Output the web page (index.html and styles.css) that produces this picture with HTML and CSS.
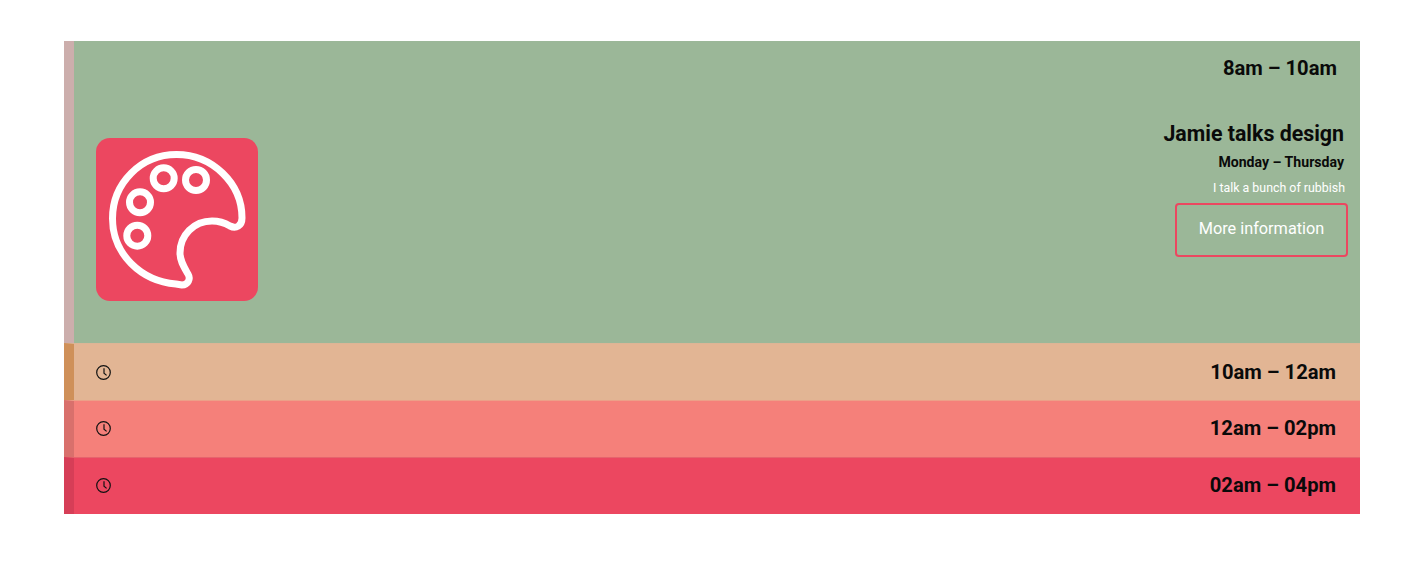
FILE: index.html
```html
<!DOCTYPE html>
<html lang="en">
<head>
    <meta charset="UTF-8">
    <meta name="viewport" content="width=device-width, initial-scale=1.0">
    <title>Schedule</title>
    <link rel="stylesheet" href="styles.css">
</head>
<body>
    <ul class="schedule">
        <li class="slot slot-green">
            <div class="slot-head open-head">
                <span class="time">8am – 10am</span>
            </div>
            <div class="slot-body">
                <div class="art">
                    <svg viewBox="0 0 162 163" width="162" height="163" fill="none" stroke="#fff" stroke-width="7">
                        <path stroke-linejoin="round" d="M80.5 16.5C45 16.5 16.5 45 16.5 80.5C16.5 116 45 143 80 146L86 147C92 147 95 141 92 136C88 129 84 123 84 115C84 97 98 83 116 83C123 83 129 85 134 88C140 91 146 88 146 80C146 45 116 16.5 80.5 16.5Z"/>
                        <circle cx="67.7" cy="40.3" r="10.5"/>
                        <circle cx="100" cy="42" r="10.5"/>
                        <circle cx="44" cy="64.3" r="10.5"/>
                        <circle cx="41.3" cy="97.7" r="10.5"/>
                    </svg>
                </div>
                <div class="details">
                    <h2>Jamie talks design</h2>
                    <h3>Monday – Thursday</h3>
                    <p>I talk a bunch of rubbish</p>
                    <a class="more" href="#">More information</a>
                </div>
            </div>
        </li>
        <li class="slot slot-orange">
            <div class="slot-head">
                <svg class="clock" viewBox="0 0 15 15" width="15" height="15"><circle cx="7.5" cy="7.5" r="6.8"/><path d="M8 3.2v5l2.6 2.2"/></svg>
                <span class="time">10am – 12am</span>
            </div>
        </li>
        <li class="slot slot-pink">
            <div class="slot-head">
                <svg class="clock" viewBox="0 0 15 15" width="15" height="15"><circle cx="7.5" cy="7.5" r="6.8"/><path d="M8 3.2v5l2.6 2.2"/></svg>
                <span class="time">12am – 02pm</span>
            </div>
        </li>
        <li class="slot slot-red">
            <div class="slot-head">
                <svg class="clock" viewBox="0 0 15 15" width="15" height="15"><circle cx="7.5" cy="7.5" r="6.8"/><path d="M8 3.2v5l2.6 2.2"/></svg>
                <span class="time">02am – 04pm</span>
            </div>
        </li>
    </ul>
</body>
</html>
```

FILE: styles.css
```css
body {
    margin: 0;
    background: #fff;
    font-family: Roboto, "Liberation Sans", sans-serif;
    color: #0a0a0a;
}
.schedule {
    list-style: none;
    margin: 41px 58px 0 64px;
    padding: 0;
}
.slot {
    border-left: 10px solid;
}
.slot-green {
    background: #9bb798;
    border-color: #ccaeac;
    height: 302px;
}
.slot-orange {
    background: #e2b594;
    border-color: #cf9059;
    border-top: 1px solid #dcb596;
}
.slot-pink {
    background: #f5807a;
    border-color: #d9706c;
    border-top: 1px solid #eca088;
}
.slot-red {
    background: #ec4760;
    border-color: #d63e57;
    border-top: 1px solid #e5646d;
}
.slot-head {
    display: flex;
    align-items: center;
    justify-content: space-between;
    height: 56px;
    padding: 0 24px 0 22px;
}
.slot-pink .slot-head,
.slot-red .slot-head {
    height: 54px;
    padding-bottom: 2px;
}
.open-head {
    height: 54px;
    justify-content: flex-end;
    padding-right: 23px;
}
.time {
    font-size: 20.2px;
    font-weight: 700;
}
.clock {
    fill: none;
    stroke: #111;
    stroke-width: 1.2;
}
.slot-body {
    display: flex;
    justify-content: space-between;
    padding: 0 12px 0 22px;
}
.art {
    width: 162px;
    height: 163px;
    margin-top: 43px;
    border-radius: 14px;
    background: #ec4760;
}
.art svg {
    display: block;
}
.details {
    display: flex;
    flex-direction: column;
    align-items: flex-end;
    margin-top: 27px;
}
.details h2 {
    margin: 0 4px 0 0;
    font-size: 21.35px;
    font-weight: 700;
    line-height: 24px;
}
.details h3 {
    margin: 7px 4px 0 0;
    font-size: 14.1px;
    font-weight: 700;
    line-height: 18px;
}
.details p {
    margin: 9px 3px 0 0;
    font-size: 12.4px;
    line-height: 16px;
    color: #fff;
}
.more {
    margin-top: 7px;
    width: 173px;
    height: 54px;
    box-sizing: border-box;
    border: 2px solid #ec4760;
    border-radius: 4px;
    color: #fff;
    font-size: 16.3px;
    line-height: 48px;
    text-align: center;
    text-decoration: none;
}
```
